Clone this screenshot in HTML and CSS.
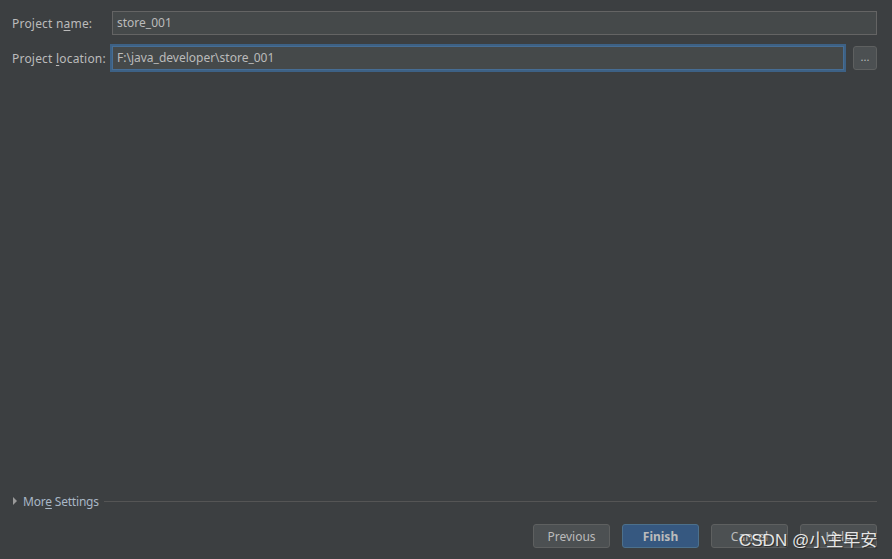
FILE: index.html
```html
<!DOCTYPE html>
<html lang="en">
<head>
    <meta charset="UTF-8">
    <title>New Project</title>
    <link rel="stylesheet" href="styles.css">
</head>
<body>
    <div class="dialog">
        <div class="form">
            <div class="row">
                <label class="label">Project n<u>a</u>me:</label>
                <div class="field">store_001</div>
            </div>
            <div class="row">
                <label class="label">Project <u>l</u>ocation:</label>
                <div class="field focused">F:\java_developer\store_001</div>
                <button class="browse">...</button>
            </div>
        </div>

        <div class="more">
            <span class="arrow"></span>
            <span class="more-text">Mor<u>e</u> Settings</span>
            <span class="more-line"></span>
        </div>

        <div class="buttons">
            <button class="btn">Previous</button>
            <button class="btn primary">Finish</button>
            <button class="btn">Cancel</button>
            <button class="btn">Help</button>
        </div>
    </div>
    <div class="watermark">CSDN @小主早安</div>
</body>
</html>
```

FILE: styles.css
```css
body {
    margin: 0;
    background-color: #3c3f41;
    font-family: 'Noto Sans', 'Liberation Sans', sans-serif;
    font-size: 12px;
    color: #bbbbbb;
    width: 892px;
    height: 559px;
    overflow: hidden;
    position: relative;
}
u {
    text-decoration-thickness: 1px;
    text-underline-offset: 2px;
}
.dialog {
    height: 559px;
    display: flex;
    flex-direction: column;
    box-sizing: border-box;
    padding: 11px 15px 11px 12px;
}
.form {
    display: flex;
    flex-direction: column;
    gap: 11px;
    flex: 1;
}
.row {
    display: flex;
    align-items: center;
    height: 24px;
}
.label {
    width: 100px;
    flex: none;
    white-space: nowrap;
    letter-spacing: 0.2px;
}
.field {
    flex: 1;
    height: 24px;
    box-sizing: border-box;
    background-color: #45494a;
    border: 1px solid #646464;
    padding: 0 4px;
    line-height: 21px;
    color: #bbbbbb;
}
.field.focused {
    margin-left: -2px;
    height: 28px;
    padding: 0 5px;
    border: 2px solid #3d6185;
    box-shadow: inset 0 0 0 1px #466d94;
    line-height: 23px;
}
.browse {
    width: 24px;
    height: 24px;
    margin-left: 7px;
    flex: none;
    background-color: #4c5052;
    border: 1px solid #5e6060;
    border-radius: 3px;
    color: #bbbbbb;
    font-family: inherit;
    font-size: 11px;
    padding: 0 0 3px;
    line-height: 1;
}
.more {
    display: flex;
    align-items: center;
    height: 14px;
    margin-bottom: 16px;
}
.arrow {
    width: 0;
    height: 0;
    border-left: 4px solid #9a9a9a;
    border-top: 4px solid transparent;
    border-bottom: 4px solid transparent;
    margin: 0 6px 0 1px;
}
.more-text {
    color: #a9b7c6;
    white-space: nowrap;
    letter-spacing: -0.2px;
}
.more-line {
    flex: 1;
    height: 1px;
    background-color: #555555;
    margin-left: 5px;
}
.buttons {
    display: flex;
    justify-content: flex-end;
    gap: 12px;
}
.btn {
    width: 77px;
    height: 24px;
    background-color: #4c5052;
    border: 1px solid #5e6060;
    border-radius: 3px;
    color: #bbbbbb;
    font-family: inherit;
    font-size: 12px;
    padding: 0;
}
.btn.primary {
    background-color: #365880;
    border-color: #4c708c;
    color: #bbbbbb;
    font-weight: bold;
}
.watermark {
    position: absolute;
    left: 739px;
    top: 526px;
    font-family: 'Liberation Sans', 'Noto Sans CJK SC', sans-serif;
    font-size: 17px;
    color: #ffffff;
    opacity: 0.85;
    text-shadow: 1px 1px 1px #222222;
    white-space: nowrap;
}
```
